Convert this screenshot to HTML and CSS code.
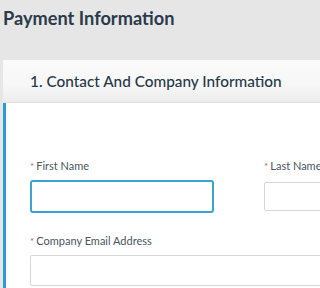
FILE: index.html
```html
<!DOCTYPE html>
<html>
<head>
<meta charset="utf-8">
<link rel="stylesheet" href="styles.css">
</head>
<body>
<div class="page">
  <h1 class="title">Payment Information</h1>
  <div class="card">
    <div class="card-head">1. Contact And Company Information</div>
    <div class="card-body">
      <div class="row">
        <div class="field first">
          <label class="label"><span class="req">*</span>First Name</label>
          <div class="input focused"></div>
        </div>
        <div class="field second">
          <label class="label"><span class="req">*</span>Last Name</label>
          <div class="input"></div>
        </div>
      </div>
      <div class="field full">
        <label class="label"><span class="req">*</span>Company Email Address</label>
        <div class="input wide"></div>
      </div>
    </div>
  </div>
</div>
</body>
</html>
```
FILE: styles.css
```css
html, body {
  margin: 0;
  padding: 0;
  background: #e6e6e6;
}
.page {
  height: 288px;
  overflow: hidden;
  box-sizing: border-box;
  font-family: Lato, "Open Sans", sans-serif;
  color: #2b3a4a;
  padding-left: 3px;
}
.title {
  margin: 0;
  padding-top: 6px;
  height: 54px;
  font-size: 18.2px;
  font-weight: 700;
  line-height: 24px;
  color: #2b3a4a;
  white-space: nowrap;
}
.card {
  background: #fff;
  overflow: hidden;
}
.card-head {
  height: 43px;
  box-sizing: border-box;
  padding-left: 27px;
  font-size: 15.35px;
  font-weight: 500;
  line-height: 43px;
  white-space: nowrap;
  color: #26384a;
  background: linear-gradient(to bottom, #fafafa 0%, #f7f7f7 60%, #ececec 100%);
  border-bottom: 1px solid #e0e0e0;
}
.card-body {
  border-left: 3px solid #2a9fd6;
  padding: 56px 0 0 24px;
  height: 200px;
}
.row {
  display: flex;
  gap: 50px;
}
.field {
  display: flex;
  flex-direction: column;
  flex-shrink: 0;
}
.label {
  font-size: 11px;
  line-height: 14px;
  color: #4a5560;
  margin-bottom: 7px;
  white-space: nowrap;
}
.req {
  color: #e05a6a;
  margin-right: 2px;
  font-size: 10px;
}
.input {
  box-sizing: border-box;
  border: 1px solid #d6d6d6;
  border-radius: 2px;
  background: #fff;
  height: 29px;
  width: 184px;
  flex-shrink: 0;
}
.input.focused {
  border: 2px solid #3aa3d4;
  border-radius: 3px;
  height: 33px;
}
.second .label {
  margin-bottom: 9px;
}
.full {
  margin-top: 21px;
}
.input.wide {
  width: 420px;
  height: 31px;
}
```
